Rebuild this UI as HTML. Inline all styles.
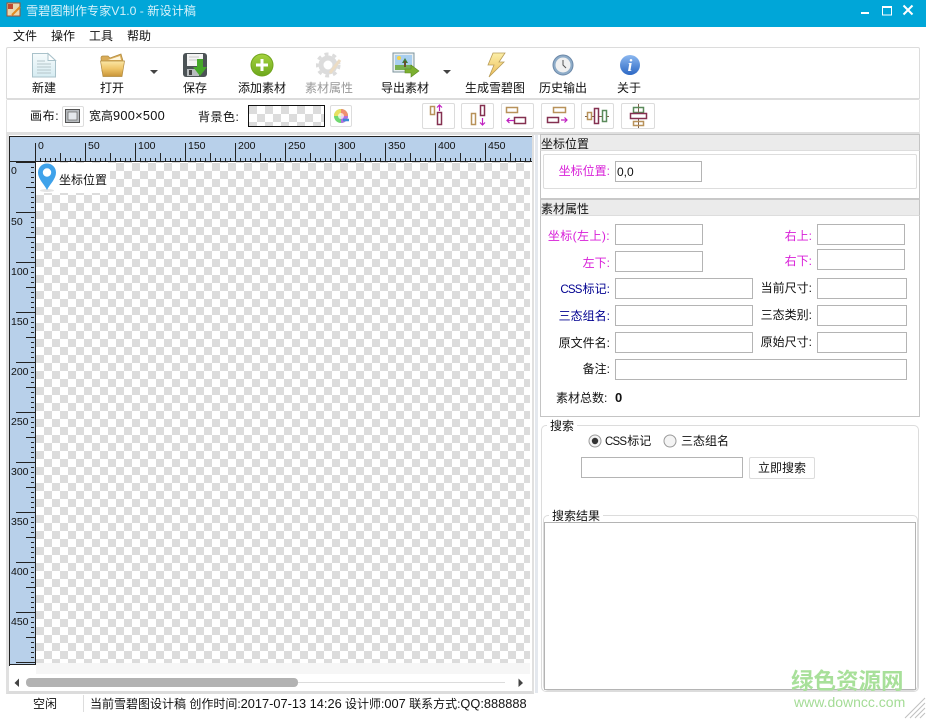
<!DOCTYPE html>
<html><head><meta charset="utf-8">
<style>
html,body{margin:0;padding:0}
body{width:926px;height:719px;position:relative;overflow:hidden;background:#fff;font:12px/16px "Liberation Sans","Noto Sans CJK SC",sans-serif;color:#111}
.a{position:absolute;box-sizing:border-box}
.t{position:absolute;white-space:nowrap;line-height:16px}
.c{transform:translateX(-50%)}
.r{position:absolute;white-space:nowrap;line-height:16px;text-align:right;width:80px}
.m{color:#d81ed8}.b{color:#000090}
.l{font-size:12.8px}
.cs{letter-spacing:-.8px;font-size:11.5px;margin-right:1px}
.i{position:absolute;box-sizing:border-box;border:1px solid #b4b4b4;background:#fff}
.ck{background:conic-gradient(#fff 25%,#dcdcdc 0 50%,#fff 0 75%,#dcdcdc 0) 0 0/16px 16px}
.btn{position:absolute;box-sizing:border-box;border:1px solid #dcdcdc;border-radius:2px;background:#fff;top:103px;height:26px}
.btn svg{position:absolute;left:0;top:0}
.btn rect{stroke-width:1.5}
.rl{position:absolute;font-size:10.5px;line-height:12px;font-family:"Liberation Sans",sans-serif;color:#111}
</style></head><body>
<svg width="0" height="0" style="position:absolute"><defs>
<linearGradient id="gd" x1="0" y1="0" x2="0" y2="1"><stop offset="0" stop-color="#f6fbfc"/><stop offset="1" stop-color="#d6ecf2"/></linearGradient>
<linearGradient id="gf" x1="0" y1="0" x2="0" y2="1"><stop offset="0" stop-color="#fbe7a6"/><stop offset=".5" stop-color="#efc568"/><stop offset="1" stop-color="#c89438"/></linearGradient>
<linearGradient id="gp" x1="0" y1="0" x2="0" y2="1"><stop offset="0" stop-color="#a4d23e"/><stop offset="1" stop-color="#6ea81e"/></linearGradient>
<linearGradient id="gi" x1="0" y1="0" x2="0" y2="1"><stop offset="0" stop-color="#8cb8f0"/><stop offset="1" stop-color="#2c68c4"/></linearGradient>
<linearGradient id="gl" x1="0" y1="0" x2="0" y2="1"><stop offset="0" stop-color="#fbeea8"/><stop offset="1" stop-color="#eebe58"/></linearGradient>
</defs></svg>
<!-- title bar -->
<div class="a" style="left:0;top:0;width:926px;height:27px;background:#00a6d8"></div>
<svg class="a" style="left:6px;top:2px" width="16" height="16"><rect x="1" y="1" width="13" height="13" fill="#e8d8b0" stroke="#a05030"/><rect x="2" y="2" width="5" height="5" fill="#c04a30"/><path d="M6 13L14 5" stroke="#e08a20" stroke-width="2"/></svg>
<div class="t" style="left:26px;top:3px;color:#d6f1fa;font-size:12.2px">雪碧图制作专家V1.0 - 新设计稿</div>
<svg class="a" style="left:860px;top:4px" width="60" height="14"><rect x="1" y="8" width="8" height="2" fill="#fff"/><rect x="22.500" y="2.500" width="9" height="8.500" fill="none" stroke="#fff" stroke-width="1"/><rect x="22" y="2" width="10" height="2" fill="#fff"/><path d="M43.500 1.500L52.500 10.500M52.500 1.500L43.500 10.500" stroke="#fff" stroke-width="2"/></svg>
<!-- menu -->
<div class="t" style="left:13px;top:28px">文件</div>
<div class="t" style="left:51px;top:28px">操作</div>
<div class="t" style="left:89px;top:28px">工具</div>
<div class="t" style="left:127px;top:28px">帮助</div>
<!-- toolbar 1 -->
<div class="a" style="left:6px;top:47px;width:914px;height:53px;border:1px solid #dcdcdc;border-bottom:2px solid #dcdcdc;border-radius:2px"></div>
<svg class="a" style="left:31px;top:52px" width="26" height="26"><path d="M1.500 1.500H17L24.500 8.500V25H1.500Z" fill="url(#gd)" stroke="#a9c2ca"/><path d="M17 1.500V8.500H24.500Z" fill="#fff" stroke="#a9c2ca"/><path d="M6 9H14M6 12H20M6 15H20M6 18H20M6 21H20" stroke="#b5c6ca"/></svg>
<svg class="a" style="left:99px;top:52px" width="28" height="27"><path d="M3 19L2 6Q2 4 4 4H9L11 6L22 2L25 12Z" fill="#d9ac58" stroke="#b08a40" stroke-width=".7"/><path d="M9 8L21 4L22 8Z" fill="#fff6dc"/><path d="M1.500 9H25.500L23 24.500H4Z" fill="url(#gf)" stroke="#b08a40" stroke-width=".7"/></svg>
<svg class="a" style="left:149px;top:69px" width="10" height="6"><path d="M1 1H9L5 5Z" fill="#444"/></svg>
<svg class="a" style="left:182px;top:52px" width="26" height="26"><rect x="1" y="1" width="24" height="24" rx="3" fill="#4c5356"/><rect x="5" y="2" width="16" height="12" fill="#f4f4f4"/><path d="M7 5H17M7 8H15" stroke="#c8c8c8"/><rect x="5" y="17" width="12" height="7" fill="#b8bcbe"/><rect x="7" y="18" width="3" height="5" fill="#444"/><path d="M15 7H21V15H25L18 24L11 15H15Z" fill="#46a82a"/></svg>
<svg class="a" style="left:250px;top:53px" width="24" height="24"><circle cx="12" cy="12" r="11.500" fill="#70a41c"/><circle cx="12" cy="12" r="10.500" fill="url(#gp)"/><path d="M12 6V18M6 12H18" stroke="#fff" stroke-width="3"/></svg>
<svg class="a" style="left:316px;top:52px" width="26" height="26"><circle cx="12" cy="13" r="7" fill="none" stroke="#dcdcdc" stroke-width="5"/><circle cx="12" cy="13" r="11" fill="none" stroke="#dcdcdc" stroke-width="3" stroke-dasharray="4 4"/><path d="M14 21L24 8" stroke="#ecdcc4" stroke-width="3"/></svg>
<svg class="a" style="left:392px;top:52px" width="28" height="26"><rect x="1" y="1" width="21" height="19" fill="#e8eef0" stroke="#7e949c"/><rect x="3" y="3" width="17" height="15" fill="#a8cff0"/><path d="M3 13H20V18H3Z" fill="#78b050"/><circle cx="7" cy="6" r="2" fill="#f4d24c"/><path d="M13 6L16 11H10Z" fill="#3f7d3a"/><rect x="12" y="9" width="2" height="6" fill="#6a5030"/><path d="M13 17H19V13L27 19L19 25V21H13Z" fill="#7cb030" stroke="#5a8a20" stroke-width=".6"/></svg>
<svg class="a" style="left:442px;top:69px" width="10" height="6"><path d="M1 1H9L5 5Z" fill="#444"/></svg>
<svg class="a" style="left:486px;top:52px" width="20" height="26"><path d="M7 1H19L13 10H18L3 25L8 13H2Z" fill="url(#gl)" stroke="#b89c58" stroke-width=".8"/></svg>
<svg class="a" style="left:552px;top:54px" width="22" height="22"><circle cx="11" cy="11" r="10" fill="#8eacc8" stroke="#6c88a8"/><circle cx="11" cy="11" r="7.500" fill="#f0f0f0"/><path d="M11 6V11L14 14" stroke="#555" stroke-width="1" fill="none"/></svg>
<svg class="a" style="left:619px;top:54px" width="22" height="22"><circle cx="11" cy="11" r="10" fill="url(#gi)"/><text x="11" y="17" text-anchor="middle" font-family="Liberation Serif" font-style="italic" font-weight="bold" font-size="17" fill="#fff">i</text></svg>
<div class="t c" style="left:44px;top:80px">新建</div>
<div class="t c" style="left:112px;top:80px">打开</div>
<div class="t c" style="left:195px;top:80px">保存</div>
<div class="t c" style="left:262px;top:80px">添加素材</div>
<div class="t c" style="left:329px;top:80px;color:#999">素材属性</div>
<div class="t c" style="left:405px;top:80px">导出素材</div>
<div class="t c" style="left:495px;top:80px">生成雪碧图</div>
<div class="t c" style="left:563px;top:80px">历史输出</div>
<div class="t c" style="left:629px;top:80px">关于</div>
<!-- toolbar 2 -->
<div class="a" style="left:6px;top:100px;width:914px;height:35px;border-left:1px solid #e4e4e4;border-right:1px solid #e4e4e4;border-bottom:3px solid #dfdfdf"></div>
<div class="t" style="left:30px;top:108px;letter-spacing:.6px">画布:</div>
<div class="a" style="left:62px;top:106px;width:22px;height:21px;border:1px solid #ddd;border-radius:2px"></div>
<svg class="a" style="left:65px;top:109px" width="16" height="15"><rect x=".5" y=".5" width="14" height="13" fill="#b8bcc0" stroke="#555"/><rect x="3" y="3" width="9" height="8" fill="#e4e8ec" stroke="#666" stroke-width=".7"/></svg>
<div class="t" style="left:89px;top:108px">宽高<span class="l" style="letter-spacing:.25px">900×500</span></div>
<div class="t" style="left:198px;top:109px;letter-spacing:.5px">背景色:</div>
<div class="a ck" style="left:248px;top:105px;width:77px;height:22px;border:1px solid #111"></div>
<div class="a" style="left:330px;top:105px;width:22px;height:22px;border:1px solid #ddd;border-radius:2px"></div>
<svg class="a" style="left:332px;top:107px" width="18" height="18"><circle cx="9" cy="9" r="7" fill="#70d870"/><path d="M9 9L9 2A7 7 0 0 1 16 9Z" fill="#f09070"/><path d="M9 9L2 9A7 7 0 0 1 9 2Z" fill="#e8e060"/><path d="M9 9L16 9A7 7 0 0 1 9 16Z" fill="#b070e0"/><circle cx="9" cy="9" r="3" fill="#fff" opacity=".7"/><path d="M11 13H17" stroke="#3a8ad8" stroke-width="2.500"/></svg>
<div class="btn" style="left:422px;width:33px"><svg width="31" height="24"><rect x="7.500" y="2.500" width="4" height="8" fill="none" stroke="#b8925a"/><rect x="14.500" y="8.500" width="4" height="12" fill="none" stroke="#843050"/><path d="M16.500 7V1M14 3.500L16.500 1L19 3.500" stroke="#c020c0" stroke-width="1.200" fill="none"/></svg></div>
<div class="btn" style="left:461px;width:33px"><svg width="31" height="24"><rect x="9.500" y="9.500" width="4" height="11" fill="none" stroke="#b8925a"/><rect x="18.500" y="1.500" width="4" height="10" fill="none" stroke="#843050"/><path d="M20.500 14V21M18 18.500L20.500 21L23 18.500" stroke="#c020c0" stroke-width="1.200" fill="none"/></svg></div>
<div class="btn" style="left:501px;width:33px"><svg width="31" height="24"><rect x="4.500" y="3.500" width="11" height="5" fill="none" stroke="#b8925a"/><rect x="12.500" y="13.500" width="11" height="6" fill="none" stroke="#843050"/><path d="M5 16.500H12M7.500 14L5 16.500L7.500 19" stroke="#c020c0" stroke-width="1.200" fill="none"/></svg></div>
<div class="btn" style="left:541px;width:34px"><svg width="32" height="24"><rect x="11.500" y="3.500" width="12" height="5" fill="none" stroke="#b8925a"/><rect x="5.500" y="13.500" width="11" height="5" fill="none" stroke="#843050"/><path d="M19 16H25M22.500 13.500L25 16L22.500 18.500" stroke="#c020c0" stroke-width="1.200" fill="none"/></svg></div>
<div class="btn" style="left:581px;width:33px"><svg width="31" height="24"><path d="M3 12.500H27" stroke="#80604a"/><rect x="5.500" y="8.500" width="4" height="7" fill="#fff" stroke="#b8925a"/><rect x="12.500" y="4.500" width="4" height="15" fill="#fff" stroke="#843050"/><rect x="20.500" y="6.500" width="4" height="11" fill="#fff" stroke="#5a8a5a"/></svg></div>
<div class="btn" style="left:621px;width:34px"><svg width="32" height="24"><path d="M16.500 0V24" stroke="#80604a"/><rect x="11.500" y="3.500" width="10" height="5" fill="none" stroke="#5a8a5a"/><rect x="8.500" y="9.500" width="16" height="5" fill="#fff" stroke="#843050"/><rect x="11.500" y="17.500" width="10" height="4" fill="none" stroke="#b8925a"/></svg></div>
<!-- canvas frame -->
<div class="a" style="left:6px;top:132px;width:528px;height:562px;border-left:3px solid #e0e0e0;border-right:2px solid #e0e0e0;border-bottom:3px solid #dcdcdc"></div>
<div class="a" style="left:9px;top:136px;width:523px;height:1px;background:#222"></div>
<div class="a" style="left:9px;top:136px;width:1px;height:530px;background:#222"></div>
<!-- top ruler -->
<div class="a" style="left:10px;top:137px;width:522px;height:25px;background:#b8d0ea"></div>
<div class="a" style="left:35px;top:137px;width:497px;height:25px;
 background-image:linear-gradient(90deg,#222 1px,transparent 1px),linear-gradient(90deg,#222 1px,transparent 1px),linear-gradient(90deg,#222 1px,transparent 1px);
 background-size:5px 3px,50px 8px,50px 19px;background-position:0 21px,25px 16px,0 6px;background-repeat:repeat-x"></div>
<div class="a" style="left:10px;top:161px;width:522px;height:1px;background:#222"></div>
<div class="rl" style="left:38px;top:140px">0</div><div class="rl" style="left:88px;top:140px">50</div><div class="rl" style="left:138px;top:140px">100</div><div class="rl" style="left:188px;top:140px">150</div><div class="rl" style="left:238px;top:140px">200</div><div class="rl" style="left:288px;top:140px">250</div><div class="rl" style="left:338px;top:140px">300</div><div class="rl" style="left:388px;top:140px">350</div><div class="rl" style="left:438px;top:140px">400</div><div class="rl" style="left:488px;top:140px">450</div>
<!-- left ruler -->
<div class="a" style="left:10px;top:162px;width:25px;height:503px;background-color:#b8d0ea;
 background-image:linear-gradient(#222 1px,transparent 1px),linear-gradient(#222 1px,transparent 1px),linear-gradient(#222 1px,transparent 1px);
 background-size:3px 5px,9px 50px,19px 50px;background-position:21px 0,16px 25px,6px 0;background-repeat:repeat-y"></div>
<div class="a" style="left:35px;top:162px;width:1px;height:503px;background:#222"></div>
<div class="a" style="left:10px;top:664px;width:25px;height:1px;background:#222"></div>
<div class="rl" style="left:11px;top:165px">0</div><div class="rl" style="left:11px;top:216px">50</div><div class="rl" style="left:11px;top:266px">100</div><div class="rl" style="left:11px;top:316px">150</div><div class="rl" style="left:11px;top:366px">200</div><div class="rl" style="left:11px;top:416px">250</div><div class="rl" style="left:11px;top:466px">300</div><div class="rl" style="left:11px;top:516px">350</div><div class="rl" style="left:11px;top:566px">400</div><div class="rl" style="left:11px;top:616px">450</div>
<!-- checker -->
<div class="a ck" style="left:36px;top:162px;width:494px;height:501px;background-position:0 1px"></div>
<div class="a" style="left:36px;top:663px;width:494px;height:11px;background:#f6f6f6"></div>
<div class="a" style="left:36px;top:163px;width:74px;height:30px;background:#fff"></div>
<svg class="a" style="left:37px;top:163px" width="21" height="30"><ellipse cx="10" cy="27.500" rx="7" ry="1.500" fill="#e4e4e4"/><path d="M10 27C7 21 1 16 1 9.500A9 9 0 0 1 19 9.500C19 16 13 21 10 27Z" fill="#3fa2ea"/><circle cx="10" cy="9.500" r="4.200" fill="#fff"/></svg>
<div class="t" style="left:59px;top:172px">坐标位置</div>
<!-- scrollbar -->
<svg class="a" style="left:12px;top:677px" width="12" height="12"><path d="M7 1.500V10L2.500 6Z" fill="#444"/></svg>
<div class="a" style="left:26px;top:678px;width:272px;height:9px;background:#b2b2b2;border-radius:4px"></div>
<div class="a" style="left:298px;top:682px;width:207px;height:1px;background:#dcdcdc"></div>
<svg class="a" style="left:498px;top:677px" width="30" height="12"><path d="M20.500 1.500V10L25 6Z" fill="#444"/></svg>
<!-- right panel -->
<div class="a" style="left:535px;top:135px;width:3px;height:558px;background:#e4e8ee"></div>
<div class="a" style="left:540px;top:134px;width:380px;height:283px;border:1px solid #c4c4c4;border-top:0"></div>
<div class="a" style="left:540px;top:134px;width:380px;height:17px;background:#ebebeb;border:1px solid #c4c4c4;border-bottom:1px solid #ddd"></div>
<div class="t" style="left:541px;top:136px">坐标位置</div>
<div class="a" style="left:543px;top:154px;width:374px;height:35px;border:1px solid #ddd;border-radius:2px"></div>
<div class="r m" style="left:530px;top:163px">坐标位置:</div>
<div class="i" style="left:615px;top:161px;width:87px;height:21px;padding:3px 1px;line-height:14px">0,0</div>
<div class="a" style="left:540px;top:198px;width:380px;height:18px;background:#ebebeb;border-top:2px solid #c8c8c8;border-left:1px solid #c4c4c4;border-right:1px solid #c4c4c4;border-bottom:1px solid #ddd"></div>
<div class="t" style="left:541px;top:201px">素材属性</div>
<div class="r m" style="left:530px;top:228px;letter-spacing:.4px">坐标(左上):</div>
<div class="i" style="left:615px;top:224px;width:88px;height:21px"></div>
<div class="r m" style="left:732px;top:228px">右上:</div>
<div class="i" style="left:817px;top:224px;width:88px;height:21px"></div>
<div class="r m" style="left:530px;top:255px">左下:</div>
<div class="i" style="left:615px;top:251px;width:88px;height:21px"></div>
<div class="r m" style="left:732px;top:253px">右下:</div>
<div class="i" style="left:817px;top:249px;width:88px;height:21px"></div>
<div class="r b" style="left:530px;top:281px"><span class="cs">CSS</span>标记:</div>
<div class="i" style="left:615px;top:278px;width:138px;height:21px"></div>
<div class="r" style="left:732px;top:280px">当前尺寸:</div>
<div class="i" style="left:817px;top:278px;width:90px;height:21px"></div>
<div class="r b" style="left:530px;top:308px">三态组名:</div>
<div class="i" style="left:615px;top:305px;width:138px;height:21px"></div>
<div class="r" style="left:732px;top:307px">三态类别:</div>
<div class="i" style="left:817px;top:305px;width:90px;height:21px"></div>
<div class="r" style="left:530px;top:335px">原文件名:</div>
<div class="i" style="left:615px;top:332px;width:138px;height:21px"></div>
<div class="r" style="left:732px;top:334px">原始尺寸:</div>
<div class="i" style="left:817px;top:332px;width:90px;height:21px"></div>
<div class="r" style="left:530px;top:361px">备注:</div>
<div class="i" style="left:615px;top:359px;width:292px;height:21px"></div>
<div class="t" style="left:556px;top:390px">素材总数:</div>
<div class="t" style="left:615px;top:390px;font-weight:bold;font-size:13px">0</div>
<!-- search -->
<div class="a" style="left:541px;top:425px;width:378px;height:267px;border:1px solid #dcdcdc;border-radius:5px"></div>
<div class="t" style="left:547px;top:418px;background:#fff;padding:0 3px">搜索</div>
<svg class="a" style="left:587px;top:433px" width="16" height="16"><circle cx="8" cy="8" r="6" fill="#f4f4f4" stroke="#9a9a9a"/><circle cx="8" cy="8" r="3.200" fill="#333"/></svg>
<div class="t" style="left:605px;top:433px"><span class="cs">CSS</span>标记</div>
<svg class="a" style="left:662px;top:433px" width="16" height="16"><circle cx="8" cy="8" r="6" fill="#f4f4f4" stroke="#9a9a9a"/></svg>
<div class="t" style="left:681px;top:433px">三态组名</div>
<div class="i" style="left:581px;top:457px;width:162px;height:21px"></div>
<div class="a" style="left:749px;top:457px;width:66px;height:22px;border:1px solid #dcdcdc;border-radius:2px;text-align:center;line-height:21px">立即搜索</div>
<div class="a" style="left:543px;top:515px;width:375px;height:176px;border:1px solid #dcdcdc;border-radius:5px"></div>
<div class="t" style="left:549px;top:508px;background:#fff;padding:0 3px">搜索结果</div>
<div class="i" style="left:544px;top:522px;width:372px;height:168px"></div>
<!-- status -->
<div class="t" style="left:33px;top:696px">空闲</div>
<div class="a" style="left:83px;top:695px;width:1px;height:17px;background:#ddd"></div>
<div class="t" style="left:90px;top:696px">当前雪碧图设计稿 创作时间:<span class="l">2017-07-13 14:26</span> 设计师:<span class="l">007</span> 联系方式:<span class="l">QQ:888888</span></div>
<svg class="a" style="left:904px;top:697px" width="22" height="22"><path d="M1 21L21 1M6 21L21 6M11 21L21 11M16 21L21 16" stroke="#c0c0c0"/></svg>
<!-- watermark -->
<div class="t" style="left:791px;top:667px;font-size:22.500px;line-height:26px;font-weight:bold;color:#a8e09a;font-family:'Noto Sans CJK SC',sans-serif">绿色资源网</div>
<div class="t" style="left:794px;top:694px;font-size:14px;color:#a4dc96;font-family:'Liberation Sans',sans-serif">www.downcc.com</div>
</body></html>
